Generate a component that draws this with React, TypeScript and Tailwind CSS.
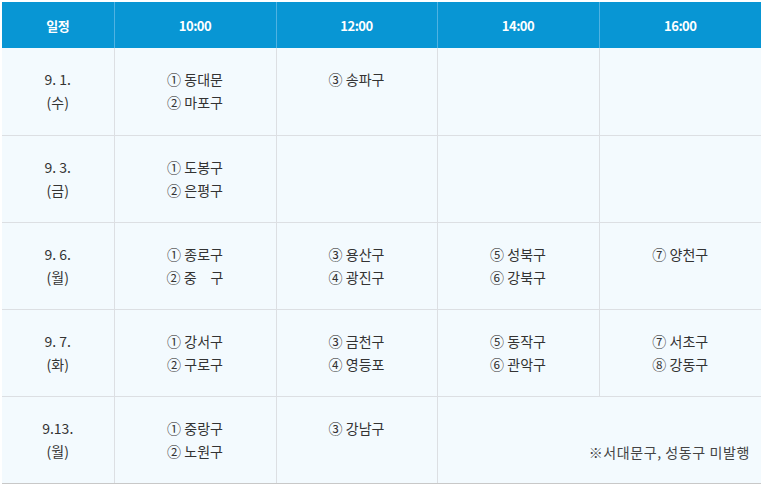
const font = { fontFamily: '"Noto Sans CJK KR", "Noto Sans", sans-serif' };

type Row = { date: string; day: string; slots: string[][] };

const rows: Row[] = [
  { date: "9. 1.", day: "(수)", slots: [["① 동대문", "② 마포구"], ["③ 송파구"], [], []] },
  { date: "9. 3.", day: "(금)", slots: [["① 도봉구", "② 은평구"], [], [], []] },
  {
    date: "9. 6.",
    day: "(월)",
    slots: [["① 종로구", "② 중　구"], ["③ 용산구", "④ 광진구"], ["⑤ 성북구", "⑥ 강북구"], ["⑦ 양천구"]],
  },
  {
    date: "9. 7.",
    day: "(화)",
    slots: [["① 강서구", "② 구로구"], ["③ 금천구", "④ 영등포"], ["⑤ 동작구", "⑥ 관악구"], ["⑦ 서초구", "⑧ 강동구"]],
  },
];

function Lines({ items }: { items: string[] }) {
  return (
    <div className="flex flex-col items-center">
      {items.map((t) => (
        <span key={t} className="block whitespace-pre leading-[23px]">
          {t}
        </span>
      ))}
    </div>
  );
}

export default function App() {
  const cell = "h-[87px] border-b border-r border-[#dcdfe3] px-2 pt-[20px] align-top text-center";
  return (
    <div className="bg-white pl-[2px] pt-[2px]" style={font}>
      <table className="w-[759px] table-fixed border-collapse text-[14px] text-[#333]">
        <colgroup>
          <col className="w-[112px]" />
          <col className="w-[162px]" />
          <col className="w-[161px]" />
          <col className="w-[162px]" />
          <col className="w-[162px]" />
        </colgroup>
        <thead>
          <tr className="h-[46px] bg-[#0896d4] text-[13px] font-bold text-white">
            {["일정", "10:00", "12:00", "14:00", "16:00"].map((h, i) => (
              <th
                key={h}
                className={`pt-[2px] text-center tracking-[-0.5px] ${i < 4 ? "border-r border-[#4fb2e2]" : ""}`}
              >
                {h}
              </th>
            ))}
          </tr>
        </thead>
        <tbody className="bg-[#f3fafe]">
          {rows.map((r) => (
            <tr key={r.date}>
              <td className={cell}>
                <Lines items={[r.date, r.day]} />
              </td>
              {r.slots.map((s, i) => (
                <td key={i} className={i === 3 ? cell.replace("border-r ", "") : cell}>
                  <Lines items={s} />
                </td>
              ))}
            </tr>
          ))}
          <tr>
            <td className={`${cell} border-b-[#c8c8c8]`}>
              <Lines items={["9.13.", "(월)"]} />
            </td>
            <td className={`${cell} border-b-[#c8c8c8]`}>
              <Lines items={["① 중랑구", "② 노원구"]} />
            </td>
            <td className={`${cell} border-b-[#c8c8c8]`}>
              <Lines items={["③ 강남구"]} />
            </td>
            <td colSpan={2} className="h-[87px] border-b border-[#c8c8c8] pr-[11px] pt-[44px] align-top text-right">
              <span className="leading-[23px] tracking-[0.6px] text-[#444]">※서대문구, 성동구 미발행</span>
            </td>
          </tr>
        </tbody>
      </table>
    </div>
  );
}
